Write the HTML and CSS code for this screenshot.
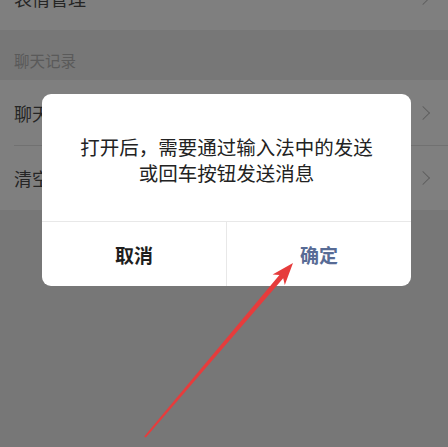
FILE: index.html
```html
<!DOCTYPE html>
<html lang="zh-CN">
<head>
    <meta charset="UTF-8">
    <meta name="viewport" content="width=device-width, initial-scale=1.0">
    <title>聊天设置</title>
    <link rel="stylesheet" href="styles.css">
</head>
<body>

<div class="settings">
    <div class="row first">
        <span>表情管理</span>
        <i class="chevron"></i>
    </div>
    <div class="section-title">聊天记录</div>
    <div class="row">
        <span>聊天记录迁移与备份</span>
        <i class="chevron"></i>
    </div>
    <div class="row">
        <span>清空聊天记录</span>
        <i class="chevron"></i>
    </div>
</div>

<div class="mask"></div>

<div class="dialog">
    <div class="dialog-body">
        <p>打开后，需要通过输入法中的发送</p>
        <p>或回车按钮发送消息</p>
    </div>
    <div class="dialog-footer">
        <a class="btn cancel" href="#">取消</a>
        <a class="btn ok" href="#">确定</a>
    </div>
</div>

<!-- 标注箭头 -->
<svg class="arrow" width="448" height="447" viewBox="0 0 448 447">
    <polygon fill="#e63c3c" points="144.2,436.4 279.4,275.1 272.6,274.6 293,263 284.8,285 283.2,278.3 145.8,437.6"/>
</svg>

</body>
</html>
```

FILE: styles.css
```css
body {
    font-family: "Noto Sans CJK SC", "Noto Sans", sans-serif;
    background-color: #eeeeee;
    color: #333;
    margin: 0;
    padding: 0;
    width: 448px;
    height: 447px;
    overflow: hidden;
    position: relative;
}

.settings {
    display: flex;
    flex-direction: column;
}

.row {
    height: 65px;
    display: flex;
    align-items: center;
    justify-content: space-between;
    padding: 0 16px 0 14px;
    background-color: #fff;
    font-size: 18px;
    color: #4a4a4a;
    position: relative;
}

.row + .row::before {
    content: "";
    position: absolute;
    top: 0;
    left: 14px;
    right: 0;
    border-top: 1px solid #e2e2e2;
}

.row.first {
    margin-top: -35px;
}

.section-title {
    height: 50px;
    box-sizing: border-box;
    padding: 10px 0 0 14px;
    line-height: 40px;
    font-size: 15.5px;
    color: #b4b4b4;
}

.chevron {
    width: 9px;
    height: 9px;
    border-top: 1.5px solid #c0c0c0;
    border-right: 1.5px solid #c0c0c0;
    transform: rotate(45deg);
    margin-right: 4px;
}

.mask {
    position: absolute;
    top: 0;
    left: 0;
    right: 0;
    bottom: 0;
    background-color: rgba(0, 0, 0, 0.5);
}

.dialog {
    position: absolute;
    top: 94px;
    left: 42px;
    width: 369px;
    background-color: #fff;
    border-radius: 9px;
    overflow: hidden;
}

.dialog-body {
    height: 127px;
    box-sizing: border-box;
    padding-top: 40px;
    text-align: center;
    font-size: 19.5px;
    line-height: 26px;
    color: #222;
}

.dialog-body p {
    margin: 0;
}

.dialog-footer {
    display: flex;
    height: 64px;
    border-top: 1px solid #e8e8e8;
}

.btn {
    flex: 1;
    display: flex;
    align-items: center;
    justify-content: center;
    text-decoration: none;
    font-size: 19px;
    font-weight: bold;
}

.btn.cancel {
    color: #1e1e1e;
    border-right: 1px solid #e8e8e8;
}

.btn.ok {
    color: #576b95;
}

.arrow {
    position: absolute;
    top: 0;
    left: 0;
}
```
